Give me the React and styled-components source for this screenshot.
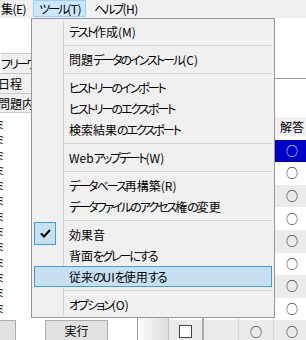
import React from 'react';
import styled, { createGlobalStyle } from 'styled-components';

const GlobalStyle = createGlobalStyle`
  html, body {
    margin: 0;
    padding: 0;
  }
  body {
    width: 306px;
    height: 340px;
    overflow: hidden;
    background: #fff;
    color: #000;
    font-family: "Noto Sans CJK JP", "Noto Sans", sans-serif;
    font-size: 12px;
    font-feature-settings: "palt" 1;
  }
`

// kana in the Windows UI font are proportional and narrower than ours
const Kana = styled.span`
  letter-spacing: -2px;
`

const Jp = ({ children }) => (
  <>
    {String(children).split(/([\u3040-\u30ff]+)/).map((part, i) =>
      /[\u3040-\u30ff]/.test(part) ? <Kana key={i}>{part}</Kana> : part
    )}
  </>
)

const Window = styled.div`
  position: relative;
  width: 306px;
  height: 340px;
  overflow: hidden;
  display: flex;
  flex-direction: column;
  background: #fff;
`

const MenuBar = styled.div`
  flex: none;
  display: flex;
  gap: 2px;
  height: 18px;
  background: #f0f0f0;
  letter-spacing: -0.5px;
`

const MenuBarItem = styled.div`
  box-sizing: border-box;
  display: flex;
  align-items: center;
  height: 17px;
  padding: 0 4px 0 5px;
  white-space: nowrap;
  border: 1px solid ${props => props.$open ? '#99d1ff' : 'transparent'};
  background: ${props => props.$open ? '#cce8ff' : 'transparent'};
  &:first-child {
    margin-left: -5px;
  }
`

const Main = styled.div`
  flex: 1;
  display: flex;
  min-height: 0;
`

const LeftPane = styled.div`
  flex: none;
  width: 137px;
  display: flex;
  flex-direction: column;
  border-right: 1px solid #a0a0a0;
  overflow: hidden;
`

const Blank = styled.div`
  flex: none;
  height: ${props => props.$h}px;
`

const LabelRow = styled.div`
  box-sizing: border-box;
  height: 20px;
  display: flex;
  align-items: center;
  background: #f0f0f0;
  border-top: 1px solid #c8c8c8;
  white-space: nowrap;
  overflow: hidden;
  margin-left: ${props => props.$indent}px;
  &:last-child {
    border-bottom: 1px solid #c8c8c8;
  }
`

const Labels = styled.div`
  flex: none;
`

const List = styled.div`
  flex: 1;
  padding-top: 4px;
  overflow: hidden;
`

const ListRow = styled.div`
  height: 15.3px;
  line-height: 15.3px;
  white-space: nowrap;
  text-indent: -5px;
  font-size: 11px;
`

const ButtonBar = styled.div`
  flex: none;
  height: 23px;
  padding-top: 3px;
  box-sizing: border-box;
  display: flex;
`

const Button = styled.div`
  box-sizing: border-box;
  flex: none;
  width: ${props => props.$w}px;
  height: 23px;
  margin-left: ${props => props.$ml}px;
  background: #e1e1e1;
  border: 1px solid #adadad;
  display: flex;
  justify-content: center;
  padding-top: 1px;
`

const RightPane = styled.div`
  flex: 1;
  display: flex;
  flex-direction: column;
  overflow: hidden;
`

const SearchPanel = styled.div`
  flex: none;
  height: 60px;
  border-bottom: 1px solid #9a9a9a;
`

const Grid = styled.div`
  display: grid;
  grid-template-columns: 31px 35px 35px 35px 36px;
  grid-auto-rows: 22.6px;
  width: 172px;
`

const HeadCell = styled.div`
  height: 19px;
  background: #f0f0f0;
  display: flex;
  align-items: center;
  justify-content: center;
`

const HeadRow = styled.div`
  display: contents;
`

const Cell = styled.div`
  box-sizing: border-box;
  display: flex;
  align-items: center;
  justify-content: center;
  color: ${props => props.$sel ? '#fff' : '#000'};
  background: ${props => props.$sel ? '#0000c8' : props.$alt ? '#ebebeb' : '#fff'};
  border-right: ${props => props.$line || 'none'};
`

const RowHead = styled(Cell)`
  background: linear-gradient(to right, #ffffff, #dcdcdc);
  border-right: 1px solid #c4c4c4;
`

const Circle = styled.span`
  font-size: 12px;
  line-height: 1;
`

const Box = styled.span`
  box-sizing: border-box;
  width: 13px;
  height: 13px;
  background: #fff;
  border: 1px solid #444;
`

const Dropdown = styled.div`
  position: absolute;
  left: 31px;
  top: 18px;
  box-sizing: border-box;
  width: 244px;
  padding: 2px;
  background: #f0f0f0;
  border: 1px solid #979797;
`

const Gutter = styled.div`
  position: absolute;
  left: 31px;
  top: 2px;
  bottom: 2px;
  width: 1px;
  background: #d4d4d4;
`

const Item = styled.div`
  position: relative;
  box-sizing: border-box;
  height: 21px;
  display: flex;
  align-items: center;
  padding-left: 34px;
  white-space: nowrap;
  border: 1px solid ${props => props.$hot ? '#3d9fdd' : 'transparent'};
  background: ${props => props.$hot ? '#c6e0f2' : 'transparent'};
`

const Separator = styled.div`
  height: 7px;
  display: flex;
  align-items: center;
  padding-left: 29px;
  &::after {
    content: '';
    flex: 1;
    height: 1px;
    background: #d4d4d4;
  }
`

const CheckMark = styled.div`
  position: absolute;
  left: -1px;
  top: -3px;
  box-sizing: border-box;
  width: 22px;
  height: 23px;
  background: #c6e0f2;
  border: 1px solid #3d9fdd;
  display: flex;
  align-items: center;
  justify-content: center;
`

const menu = [
  { text: 'テスト作成(M)' },
  { sep: true },
  { text: '問題データのインストール(C)' },
  { sep: true },
  { text: 'ヒストリーのインポート' },
  { text: 'ヒストリーのエクスポート' },
  { text: '検索結果のエクスポート' },
  { sep: true },
  { text: 'Webアップデート(W)' },
  { sep: true },
  { text: 'データベース再構築(R)' },
  { text: 'データファイルのアクセス権の変更' },
  { sep: true },
  { text: '効果音', checked: true },
  { text: '背面をグレーにする' },
  { text: '従来のUIを使用する', hot: true },
  { sep: true },
  { text: 'オプション(O)' },
]

const rows = Array.from({ length: 9 }, (_, i) => i)

export default function App() {
  return (
    <>
      <GlobalStyle />
      <Window>
        <MenuBar>
          <MenuBarItem>集(E)</MenuBarItem>
          <MenuBarItem $open><Jp>ツール(T)</Jp></MenuBarItem>
          <MenuBarItem><Jp>ヘルプ(H)</Jp></MenuBarItem>
        </MenuBar>
        <Main>
          <LeftPane>
            <Blank $h={35} />
            <Labels>
              <LabelRow $indent={1}><Jp>フリーワード</Jp></LabelRow>
              <LabelRow $indent={-2}>日程</LabelRow>
              <LabelRow $indent={-2}>問題内容</LabelRow>
            </Labels>
            <List>
              {Array.from({ length: 13 }, (_, i) => <ListRow key={i}>ミ</ListRow>)}
            </List>
            <ButtonBar>
              <Button $w={60} $ml={-44}>検索</Button>
              <Button $w={63} $ml={29}>実行</Button>
            </ButtonBar>
          </LeftPane>
          <RightPane>
            <SearchPanel />
            <Blank $h={38} />
            <Grid>
              <HeadRow>
                <HeadCell />
                <HeadCell />
                <HeadCell />
                <HeadCell />
                <HeadCell>解答</HeadCell>
              </HeadRow>
              {rows.map(i => {
                const sel = i === 0
                const alt = i % 2 === 0
                return (
                  <React.Fragment key={i}>
                    <RowHead />
                    <Cell $sel={sel} $alt={alt} $line="2px solid #a8a8a8"><Box /></Cell>
                    <Cell $sel={sel} $alt={alt} $line="1px solid #d8d8d8" />
                    <Cell $sel={sel} $alt={alt} $line="1px solid #d8d8d8"><Circle>○</Circle></Cell>
                    <Cell $sel={sel} $alt={alt}><Circle>○</Circle></Cell>
                  </React.Fragment>
                )
              })}
            </Grid>
          </RightPane>
        </Main>
        <Dropdown>
          <Gutter />
          {menu.map((m, i) => m.sep ? <Separator key={i} /> : (
            <Item key={i} $hot={m.hot}>
              {m.checked && (
                <CheckMark>
                  <svg width="11" height="9" viewBox="0 0 11 9">
                    <path d="M1 4.5 L4 7.5 L10 1" fill="none" stroke="#000" strokeWidth="2" />
                  </svg>
                </CheckMark>
              )}
              <Jp>{m.text}</Jp>
            </Item>
          ))}
        </Dropdown>
      </Window>
    </>
  )
}
